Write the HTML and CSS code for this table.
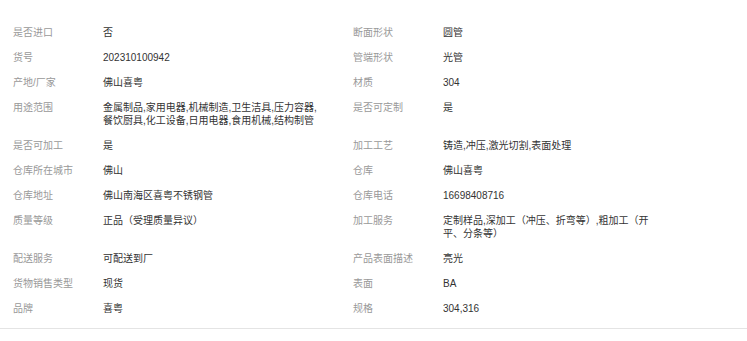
FILE: index.html
```html
<!DOCTYPE html>
<html lang="zh-CN">
<head>
<meta charset="utf-8">
<link rel="stylesheet" href="styles.css">
</head>
<body>
<div class="attrs">
  <div class="row">
    <div class="pair"><span class="label">是否进口</span><span class="value">否</span></div>
    <div class="pair"><span class="label">断面形状</span><span class="value">圆管</span></div>
  </div>
  <div class="row">
    <div class="pair"><span class="label">货号</span><span class="value">202310100942</span></div>
    <div class="pair"><span class="label">管端形状</span><span class="value">光管</span></div>
  </div>
  <div class="row">
    <div class="pair"><span class="label">产地/厂家</span><span class="value">佛山喜粤</span></div>
    <div class="pair"><span class="label">材质</span><span class="value">304</span></div>
  </div>
  <div class="row">
    <div class="pair"><span class="label">用途范围</span><span class="value">金属制品,家用电器,机械制造,卫生洁具,压力容器,餐饮厨具,化工设备,日用电器,食用机械,结构制管</span></div>
    <div class="pair"><span class="label">是否可定制</span><span class="value">是</span></div>
  </div>
  <div class="row">
    <div class="pair"><span class="label">是否可加工</span><span class="value">是</span></div>
    <div class="pair"><span class="label">加工工艺</span><span class="value">铸造,冲压,激光切割,表面处理</span></div>
  </div>
  <div class="row">
    <div class="pair"><span class="label">仓库所在城市</span><span class="value">佛山</span></div>
    <div class="pair"><span class="label">仓库</span><span class="value">佛山喜粤</span></div>
  </div>
  <div class="row">
    <div class="pair"><span class="label">仓库地址</span><span class="value">佛山南海区喜粤不锈钢管</span></div>
    <div class="pair"><span class="label">仓库电话</span><span class="value">16698408716</span></div>
  </div>
  <div class="row">
    <div class="pair"><span class="label">质量等级</span><span class="value">正品（受理质量异议）</span></div>
    <div class="pair"><span class="label">加工服务</span><span class="value">定制样品,深加工（冲压、折弯等）,粗加工（开平、分条等）</span></div>
  </div>
  <div class="row">
    <div class="pair"><span class="label">配送服务</span><span class="value">可配送到厂</span></div>
    <div class="pair"><span class="label">产品表面描述</span><span class="value">亮光</span></div>
  </div>
  <div class="row">
    <div class="pair"><span class="label">货物销售类型</span><span class="value">现货</span></div>
    <div class="pair"><span class="label">表面</span><span class="value">BA</span></div>
  </div>
  <div class="row">
    <div class="pair"><span class="label">品牌</span><span class="value">喜粤</span></div>
    <div class="pair"><span class="label">规格</span><span class="value">304,316</span></div>
  </div>
</div>
</body>
</html>
```

FILE: styles.css
```css
html, body {
  margin: 0;
  padding: 0;
  background: #ffffff;
}

body {
  font-family: "Liberation Sans", "Noto Sans CJK SC", sans-serif;
  font-size: 10px;
  line-height: 13px;
}

.attrs {
  padding: 20px 0 7px 13px;
  border-bottom: 1px solid #e4e4e4;
}

.row {
  display: flex;
}

.pair {
  display: flex;
  width: 340px;
  padding: 6px 0;
}

.label {
  flex: 0 0 90px;
  color: #999999;
}

.value {
  width: 217px;
  color: #333333;
}
```
